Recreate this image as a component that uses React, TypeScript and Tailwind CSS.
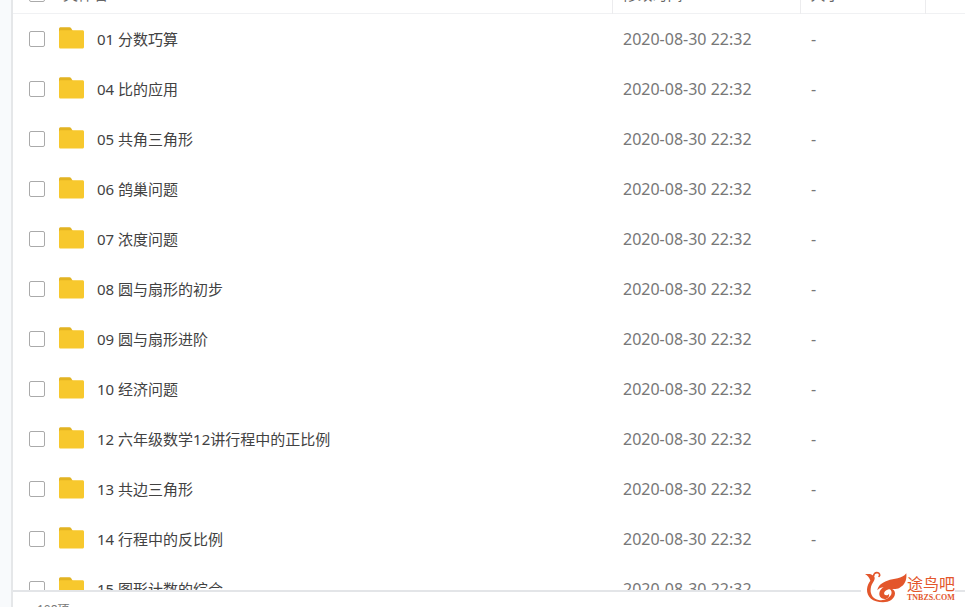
const folders = [
  "01 分数巧算",
  "04 比的应用",
  "05 共角三角形",
  "06 鸽巢问题",
  "07 浓度问题",
  "08 圆与扇形的初步",
  "09 圆与扇形进阶",
  "10 经济问题",
  "12 六年级数学12讲行程中的正比例",
  "13 共边三角形",
  "14 行程中的反比例",
  "15 图形计数的综合",
];

const checkbox = "block w-4 h-4 appearance-none rounded-xs border border-[#aaa] bg-white checked:bg-[#f6c62d]";

function FolderIcon() {
  return (
    <svg className="block w-[25px] h-[24px] shrink-0" viewBox="0 0 25 24" aria-hidden="true">
      <path d="M1.800 .3h8.700c.8 0 1.200.3 1.700.9L13.500 3.500V8H0V2C0 .9.700.3 1.800.3z" fill="#e2b322" />
      <path d="M1.500 3.200h22c.9 0 1.500.6 1.500 1.500v15.300c0 .9-.6 1.500-1.500 1.500h-22C.6 21.500 0 20.900 0 20V4.700c0-.9.600-1.500 1.500-1.500z" fill="#f7c82d" />
    </svg>
  );
}

function BirdLogo() {
  return (
    <svg className="block w-[42px] h-[32px] shrink-0" viewBox="0 0 126 96" aria-hidden="true">
      <g fill="#e3562b">
        <path d="M0 9c8 1 15-1 22 3 8 4 9 11 5 17-5 8-9 14-10 25-2 18 9 30 24 33 16 3 30-4 37-15 4-8 1-16-6-18 10-2 18 4 18 13 0 17-18 27-36 27C23 94 5 78 6 55c1-12 5-19 10-26C13 20 8 14 0 9z" />
        <path d="M124 7c2 22-6 36-20 43-7 4-15 5-22 4-12-1-21 3-24 10-2 5 1 9 6 9 4 0 6-2 8-5 2 9-4 15-12 16-10 1-18-7-17-17 1-8 6-14 13-18-8 0-14 3-19 9 2-14 13-23 30-29 21-7 43-4 57-22z" />
      </g>
      <path d="M26 15c0-7 5-11 11-10 7 1 9 8 5 11" fill="none" stroke="#e3562b" strokeWidth="5" strokeLinecap="round" />
    </svg>
  );
}

export default function App() {
  return (
    <div className="flex h-screen overflow-hidden bg-white font-['Noto_Sans','Noto_Sans_CJK_SC',sans-serif]">
      <aside className="w-[13px] shrink-0 border-r-2 border-[#e5e7e9] bg-[#f8fafc]" />
      <main className="flex min-w-0 flex-1 flex-col">
        <div className="min-h-0 flex-1 overflow-hidden">
          <table className="-mt-6 w-full table-fixed border-collapse text-left">
            <colgroup>
              <col className="w-[46px]" />
              <col />
              <col className="w-[188px]" />
              <col className="w-[125px]" />
              <col className="w-[40px]" />
            </colgroup>
            <thead className="text-[15px] leading-6 text-[#666]">
              <tr className="h-[37px] border-b border-[#f0f1f3]">
                <th className="pl-4">
                  <input type="checkbox" aria-label="全选" className={checkbox} />
                </th>
                <th className="pl-1 font-normal">文件名</th>
                <th className="border-l border-[#ececee] pl-[10px] font-normal">修改时间</th>
                <th className="border-l border-[#ececee] pl-[10px] font-normal">大小</th>
                <th className="border-l border-[#ececee]" />
              </tr>
            </thead>
            <tbody>
              {folders.map((name, i) => (
                <tr key={name} className="h-[50px]">
                  <td className="pt-0.5 pl-4">
                    <input id={`folder-${i}`} type="checkbox" className={checkbox} />
                  </td>
                  <td className="pt-0.5">
                    <label htmlFor={`folder-${i}`} className="flex items-center gap-[13px] text-[15px] leading-6 text-[#424242]">
                      <FolderIcon />
                      <span className="truncate">{name}</span>
                    </label>
                  </td>
                  <td className="pt-0.5 pl-[11px] text-base text-[#777]">2020-08-30 22:32</td>
                  <td className="pt-0.5 pl-[11px] text-base text-[#777]">-</td>
                  <td />
                </tr>
              ))}
            </tbody>
          </table>
        </div>
        <footer className="h-[17px] shrink-0 overflow-hidden border-t-2 border-[#e3e5e8] pt-2.5 pl-6 text-xs text-[#777]">
          108项
        </footer>
      </main>
      <div className="absolute right-2.5 bottom-1 flex items-end bg-white pl-1 text-[#e3562b]">
        <BirdLogo />
        <div className="flex flex-col font-['Liberation_Serif','Noto_Sans_CJK_SC',serif]">
          <span className="text-base leading-4">途鸟吧</span>
          <span className="text-[8px] leading-[10px] font-bold">TNBZS.COM</span>
        </div>
      </div>
    </div>
  );
}
